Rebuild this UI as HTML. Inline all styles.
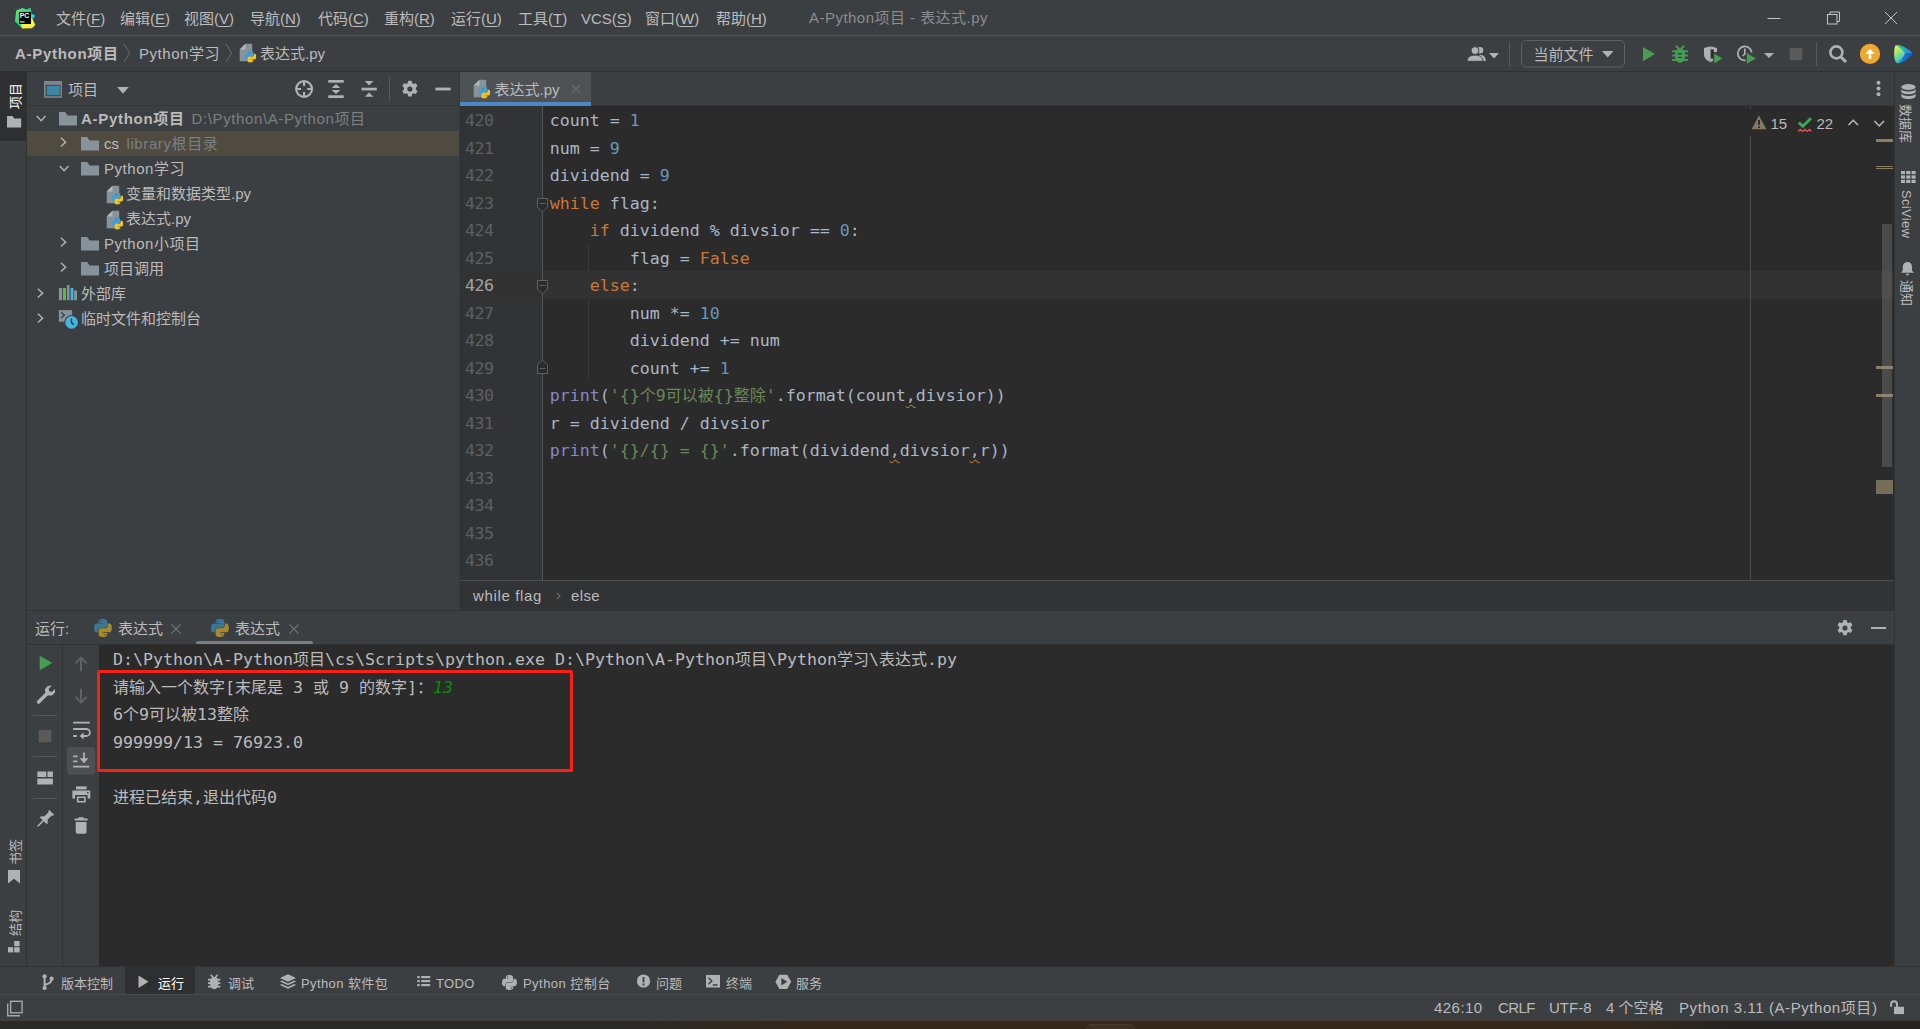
<!DOCTYPE html>
<html lang="zh-CN">
<head>
<meta charset="utf-8">
<title>A-Python项目 - 表达式.py</title>
<style>
*{box-sizing:border-box;margin:0;padding:0}
html,body{width:1920px;height:1029px;overflow:hidden;background:#3c3f41}
body{font-family:"Liberation Sans","Noto Sans CJK SC",sans-serif;font-size:15px;color:#bbbbbb;position:relative;line-height:1}
.a{position:absolute}
.t{position:absolute;white-space:pre;line-height:20px;height:20px}
.b{font-weight:bold;letter-spacing:.7px}
.g{color:#7d7f81}
.mono{font-family:"DejaVu Sans Mono","Liberation Mono","Noto Sans CJK SC",monospace;font-size:16.61px}
.c{font-family:"Noto Sans CJK SC",sans-serif;font-size:16px;line-height:0}
svg{position:absolute;overflow:visible}
u{text-decoration:underline;text-underline-offset:2px;text-decoration-thickness:1px}
.s13{font-size:13px}
/* regions */
#menubar{left:0;top:0;width:1920px;height:36px;background:#3c3f41;border-bottom:1px solid #515355}
#navbar{left:0;top:36px;width:1920px;height:35px;background:#3c3f41}
#navline{left:0;top:71px;width:1920px;height:1px;background:#2f3133}
#leftstrip{left:0;top:72px;width:26px;height:894px;background:#3c3f41}
#leftsel{left:0;top:71px;width:26px;height:70px;background:#2d2f30}
#leftline{left:26px;top:72px;width:1px;height:894px;background:#323232}
#rightstrip{left:1895px;top:72px;width:25px;height:894px;background:#3c3f41}
#rightline{left:1894px;top:72px;width:1px;height:894px;background:#323232}
#projhead{left:27px;top:72px;width:432px;height:33px;background:#3c3f41}
#projline{left:27px;top:105px;width:432px;height:1px;background:#333537}
#proj{left:27px;top:106px;width:432px;height:504px;background:#3c3f41}
#projsep{left:459px;top:72px;width:1px;height:538px;background:#36383a}
#tabs{left:460px;top:72px;width:1434px;height:34px;background:#3c3f41}
#tab1{left:0;top:0;width:131px;height:34px;background:#4e5254;border-bottom:4px solid #4a88c7}
#editor{left:460px;top:106px;width:1434px;height:474px;background:#2b2b2b;overflow:hidden}
#gutter{left:0;top:0;width:82px;height:474px;background:#313335}
#gutline{left:82px;top:0;width:1px;height:474px;background:#555555}
#curline{left:83px;top:165px;width:1351px;height:28px;background:#323232}
#margin{left:1290px;top:0;width:1px;height:474px;background:#4d4d4d}
.ln{position:absolute;left:0;width:33.5px;letter-spacing:-.5px;text-align:right;color:#5d6063;white-space:pre;height:28.5px;line-height:28.5px}
.cl{position:absolute;left:89.7px;color:#a9b7c6;white-space:pre;height:28.5px;line-height:28.5px}
.k{color:#cc7832}.n{color:#6897bb}.s{color:#6a8759}.f{color:#8888c6}
.w{text-decoration:underline wavy #c9903e;text-decoration-thickness:1px;text-underline-offset:3px;text-decoration-skip-ink:none}
#crumbs{left:460px;top:580px;width:1434px;height:30px;background:#313335;border-top:1px solid #4b4d4f}
#runtop{left:27px;top:610px;width:1867px;height:1px;background:#323232}
#runhead{left:28px;top:611px;width:1866px;box-shadow:-1px 0 0 #3c3f41;height:33px;background:#3c3f41}
#runline{left:27px;top:644px;width:1867px;height:1px;background:#323232}
#runtb1{left:27px;top:645px;width:35px;height:321px;background:#3c3f41}
#runtbl{left:62px;top:645px;width:1px;height:321px;background:#323232}
#runtb2{left:63px;top:645px;width:36px;height:321px;background:#3c3f41}
#console{left:99px;top:645px;width:1795px;height:321px;background:#2b2b2b}
.co{position:absolute;left:14px;color:#bbbbbb;white-space:pre;height:28.5px;line-height:28.5px}
#redbox{left:97px;top:670px;width:476.2px;height:102px;border:3.2px solid #fa2012;border-radius:3px 2px 1.5px 2px}
#botline{left:0;top:966px;width:1920px;height:1px;background:#323232}
#botbar{left:0;top:967px;width:1920px;height:27px;background:#3c3f41}
#botsel{left:125px;top:0;width:70px;height:27px;background:#2d2f30}
#statline{left:0;top:994px;width:1920px;height:1px;background:#47494b}
#status{left:0;top:995px;width:1920px;height:25px;background:#3c3f41}
#desk{left:0;top:1020px;width:1920px;height:9px;background:linear-gradient(90deg,#2a2a27 0,#2a2a27 32%,#36291b 42%,#36291b 84%,#262422 90%,#262422 100%);box-shadow:inset 0 1px 0 rgba(255,255,255,.1)}
.vt{position:absolute;white-space:pre;font-size:13px;line-height:16px;height:16px;transform-origin:0 0}
</style>
</head>
<body>
<svg width="0" height="0" style="position:absolute">
<defs>
<symbol id="pylogo" viewBox="0 0 112 112">
<path fill="var(--pb,#3d9fd6)" d="M54.9,0C50.3,0 46,.4 42.1,1.1 30.8,3.1 28.7,7.3 28.7,15v10.2h26.8v3.4H18.6c-7.8,0-14.6,4.7-16.7,13.6-2.5,10.2-2.6,16.6 0,27.3 1.9,7.9 6.5,13.6 14.2,13.6h9.2V70.8c0-8.8 7.7-16.7 16.8-16.7h26.8c7.5,0 13.4-6.1 13.4-13.6V15c0-7.3-6.1-12.7-13.4-13.9C64.3,.3 59.5,0 54.9,0Z"/>
<path fill="var(--py,#f4c31f)" d="M85.6,28.7v11.9c0,9.2-7.8,17-16.8,17H42.1c-7.3,0-13.4,6.3-13.4,13.6v25.5c0,7.3 6.3,11.5 13.4,13.6 8.5,2.5 16.6,2.9 26.8,0 6.8-2 13.4-5.9 13.4-13.6V86.5H55.5v-3.4h40.2c7.8,0 10.7-5.4 13.4-13.6 2.8-8.4 2.7-16.5 0-27.3-1.9-7.8-5.6-13.6-13.4-13.6z"/>
<circle cx="40.6" cy="13" r="5" fill="#3c3f41" fill-opacity=".75"/><circle cx="70.4" cy="98.6" r="5" fill="#3c3f41" fill-opacity=".75"/>
</symbol>
<symbol id="pyfile" viewBox="0 0 20 20">
<path fill="#87939a" d="M7.5,.8H14.2V18.2H1.7V6.6Z"/>
<path fill="#aeb9bf" d="M7.5,.8V6.6H1.7Z"/>
<use href="#pylogo" x="6.6" y="7.8" width="11.8" height="11.8"/>
</symbol>
<symbol id="folder" viewBox="0 0 18 14">
<path fill="#87939a" d="M0,0H6.2L8.6,3.4H18V13.6H0Z"/>
</symbol>
<symbol id="chr" viewBox="0 0 8 12">
<path fill="none" stroke="#afb1b3" stroke-width="1.6" d="M1,0.8L6.2,5.6L1,10.4"/>
</symbol>
<symbol id="chd" viewBox="0 0 12 8">
<path fill="none" stroke="#afb1b3" stroke-width="1.6" d="M0.8,1L5.6,6.2L10.4,1"/>
</symbol>
</defs>
</svg>
<!-- menu bar -->
<div class="a" id="menubar">
<svg style="left:14px;top:7px" width="22" height="22" viewBox="0 0 22 22">
<defs><linearGradient id="lg1" x1="0" y1="0" x2="1" y2="1"><stop offset="0" stop-color="#7be56a"/><stop offset=".5" stop-color="#21d789"/><stop offset="1" stop-color="#17c7a0"/></linearGradient></defs>
<path fill="url(#lg1)" d="M2.2,3.6L8.5,1L12.5,2.6L16.5,0.8L17.5,5L8,21.2L1,14.5Z"/>
<path fill="#f2ef4a" d="M17.5,9.5L21.3,18L18,21.2L8,21.6L7,17L16,9Z"/>
<path fill="#12d6f5" d="M17,6.2L21.2,8.5L19.5,11.5L17,11Z"/>
<rect x="5" y="5" width="12" height="12" fill="#000"/>
<text x="5.7" y="10.6" font-family="Liberation Sans,sans-serif" font-weight="bold" font-size="6.6" fill="#fff" textLength="9.6" lengthAdjust="spacingAndGlyphs">PC</text>
<rect x="6" y="14.4" width="4.6" height="1" fill="#fff"/>
</svg>
<span class="t" style="left:56px;top:9px">文件(<u>F</u>)</span>
<span class="t" style="left:120px;top:9px">编辑(<u>E</u>)</span>
<span class="t" style="left:184px;top:9px">视图(<u>V</u>)</span>
<span class="t" style="left:250px;top:9px">导航(<u>N</u>)</span>
<span class="t" style="left:318px;top:9px">代码(<u>C</u>)</span>
<span class="t" style="left:384px;top:9px">重构(<u>R</u>)</span>
<span class="t" style="left:451px;top:9px">运行(<u>U</u>)</span>
<span class="t" style="left:518px;top:9px">工具(<u>T</u>)</span>
<span class="t" style="left:581px;top:9px">VCS(<u>S</u>)</span>
<span class="t" style="left:645px;top:9px">窗口(<u>W</u>)</span>
<span class="t" style="left:716px;top:9px">帮助(<u>H</u>)</span>
<span class="t" style="left:809px;top:8px;color:#8a8c8e;letter-spacing:.47px">A-Python项目 - 表达式.py</span>
<!-- window controls -->
<svg style="left:1760px;top:8px" width="150" height="22" viewBox="0 0 150 22" fill="none" stroke="#c4c4c4" stroke-width="1">
<path d="M7.5,10.5H20.5"/>
<rect x="67.5" y="6.5" width="9.5" height="9.5"/>
<path d="M70,6.5V4H79.5V13.5H77"/>
<path d="M125,4L137,16M137,4L125,16"/>
</svg>
</div>
<!-- nav bar -->
<div class="a" id="navbar">
<span class="t b" style="left:15px;top:8px">A-Python项目</span>
<svg style="left:123px;top:7px" width="8" height="20" viewBox="0 0 8 20" fill="none" stroke="#6a6d6f" stroke-width="1"><path d="M1,.8L6.6,10L1,19.2"/></svg>
<span class="t" style="left:139px;top:8px;letter-spacing:.55px">Python学习</span>
<svg style="left:224.5px;top:7px" width="8" height="20" viewBox="0 0 8 20" fill="none" stroke="#6a6d6f" stroke-width="1"><path d="M1,.8L6.6,10L1,19.2"/></svg>
<svg style="left:238px;top:7px" width="20" height="20"><use href="#pyfile"/></svg>
<span class="t" style="left:260px;top:8px">表达式.py</span>
<!-- right toolbar -->
<svg style="left:1460px;top:0" width="460" height="35" viewBox="1460 36 460 35">
<!-- people -->
<g fill="#afb1b3">
<circle cx="1480" cy="50.200" r="3.300"/><path d="M1478,61c.8-2 1.600-4.600 .4-5.700c.6-.2 1.200-.2 1.800-.2c3.400,0 5.300,1.500 5.600,5.900z"/>
<circle cx="1475" cy="50.600" r="4" stroke="#3c3f41" stroke-width="1"/><path stroke="#3c3f41" stroke-width="1" d="M1467,61.300c.4-4.600 3.600-6.200 8-6.200s7.600,1.600 8,6.200z"/>
<path d="M1489,53H1499L1494,58.500z"/>
</g>
<path stroke="#555759" stroke-width="1" d="M1509.500,42V66"/>
<rect x="1521.500" y="40.500" width="103" height="26.500" rx="4.500" fill="none" stroke="#5e6062"/>
<path fill="#afb1b3" d="M1602,51H1613.500L1607.750,57.500z"/>
<!-- run -->
<path fill="#499c54" d="M1643,47L1655,54.100L1643,61.300z"/>
<!-- bug -->
<g fill="#499c54" stroke="none">
<ellipse cx="1680" cy="55.600" rx="5" ry="7.400"/>
<path fill="none" stroke="#499c54" stroke-width="2" d="M1676,45.800L1678.800,48.800M1684,45.800L1681.200,48.800M1672.300,51.300H1687.800M1672.300,55.600H1687.800M1672.300,59.900H1687.800"/>
</g>
<path fill="#3c3f41" d="M1677.900,53.100H1682V54.400H1677.900zM1677.900,56.800H1682V58.100H1677.900z"/>
<!-- coverage -->
<path fill="#afb1b3" d="M1710.500,46.200L1704,48V54c0,3.900 2.700,6.800 6.500,8z"/>
<path fill="#afb1b3" d="M1710.500,46.200L1717,48V52H1713.600V49.600H1710.500z"/>
<path fill="#2b2d2f" d="M1711.300,49.600H1713.500V58.600H1711.300z"/>
<path fill="#afb1b3" d="M1710.500,58.600h2.400v2.400l-2.400,1.200z"/>
<path fill="#499c54" stroke="#3c3f41" stroke-width=".8" d="M1713.800,53L1723,58.500L1713.800,64z"/>
<!-- profile -->
<path fill="none" stroke="#afb1b3" stroke-width="1.800" d="M1745.500,60.400A7,7 0 1 1 1751.700,52.300"/>
<path fill="none" stroke="#afb1b3" stroke-width="1.600" d="M1744.800,48.500V54L1742.600,56"/>
<path fill="#499c54" d="M1746.800,53L1755.900,58.400L1746.800,63.800z"/>
<path fill="#afb1b3" d="M1764,53H1774L1769,58z"/>
<!-- stop -->
<rect x="1789.700" y="47.900" width="12.500" height="12.300" fill="#5a5a5a"/>
<path stroke="#555759" stroke-width="1" d="M1816.500,42V66"/>
<!-- search -->
<circle cx="1836.400" cy="52.400" r="6" fill="none" stroke="#afb1b3" stroke-width="2.600"/>
<path stroke="#afb1b3" stroke-width="3" d="M1840.700,56.700L1846,62"/>
<!-- update -->
<circle cx="1870" cy="53.900" r="10.150" fill="#f0a732"/>
<path fill="#fff" d="M1870,48.800L1874.800,53.900H1871.300V58.900H1868.700V53.900H1865.200z"/>
<!-- logo -->
<defs>
<linearGradient id="lgA" x1=".2" y1="0" x2=".6" y2="1"><stop offset="0" stop-color="#f1f640"/><stop offset=".55" stop-color="#7edb8f"/><stop offset="1" stop-color="#1fc3d6"/></linearGradient>
<linearGradient id="lgB" x1="0" y1="0" x2="1" y2=".5"><stop offset="0" stop-color="#25cf7c"/><stop offset=".5" stop-color="#21b3c4"/><stop offset="1" stop-color="#2390ec"/></linearGradient>
<linearGradient id="lgC" x1="1" y1="0" x2="0" y2="1"><stop offset="0" stop-color="#1a55c4"/><stop offset=".6" stop-color="#1878d6"/><stop offset="1" stop-color="#16c0ee"/></linearGradient>
</defs>
<path fill="url(#lgB)" d="M1895.800,45.300C1897,44.300 1899,44.800 1901,45.600C1905,47.300 1910,50.500 1912.200,53L1905,53.800z"/>
<path fill="url(#lgC)" d="M1912.200,53C1912.500,53.800 1912.300,54.500 1911.500,55.400C1908.500,58.400 1902,62.200 1898.500,63.200C1897.600,63.400 1897,63.300 1896.600,62.800L1905,53.800z"/>
<path fill="url(#lgA)" d="M1895.800,45.300C1894.600,46.500 1894.100,50 1894.100,54C1894.100,58 1895,61.600 1896.600,62.800C1900,60.800 1903.500,57.500 1905,53.800C1903.500,50.500 1899.500,47 1895.800,45.300z"/>
</svg>
<span class="t" style="left:1533.500px;top:9px">当前文件</span>
</div>
<div class="a" id="navline"></div>
<!-- left strip -->
<div class="a" id="leftstrip"></div>
<div class="a" id="leftsel"></div>
<div class="a" id="leftline"></div>
<span class="vt" style="left:7.500px;top:109px;transform:rotate(-90deg);color:#ffffff">项目</span>
<svg style="left:7px;top:116px" width="15" height="12" viewBox="0 0 15 12"><path fill="#afb1b3" d="M0,0H5.600L7.200,2.400H14.200V11.600H0z"/></svg>
<span class="vt" style="left:8px;top:864.500px;transform:rotate(-90deg)">书签</span>
<svg style="left:8.400px;top:870.200px" width="12" height="14" viewBox="0 0 12 14"><path fill="#afb1b3" d="M0,0H12V13.600L6,8.800L0,13.600z"/></svg>
<span class="vt" style="left:8px;top:935.500px;transform:rotate(-90deg)">结构</span>
<svg style="left:8.400px;top:941.400px" width="12" height="12" viewBox="0 0 12 12" fill="#afb1b3"><rect x="6.200" y="0" width="5.400" height="5.200"/><rect x="0" y="6.200" width="5.200" height="5.200"/><rect x="6.200" y="6.200" width="5.400" height="5.200"/></svg>
<!-- right strip -->
<div class="a" id="rightstrip"></div>
<div class="a" id="rightline"></div>
<svg style="left:1901px;top:84px" width="15" height="16" viewBox="0 0 15 16" fill="#afb1b3">
<ellipse cx="7.500" cy="3" rx="7.200" ry="3"/>
<path d="M.3,4.800c0,1.600 3.200,2.800 7.200,2.800s7.200-1.200 7.200-2.800v2.600c0,1.600-3.200,2.800-7.200,2.800S.3,9 .3,7.400z"/>
<path d="M.3,9.200c0,1.600 3.200,2.800 7.200,2.800s7.200-1.200 7.200-2.800v2.800c0,1.700-3.200,3-7.200,3S.3,13.700 .3,12z"/>
</svg>
<span class="vt" style="left:1912.500px;top:104px;transform:rotate(90deg)">数据库</span>
<svg style="left:1901px;top:170.500px" width="15" height="12" viewBox="0 0 15 12" fill="#afb1b3">
<rect x="0" y="0" width="4" height="3.200"/><rect x="5.200" y="0" width="4.200" height="3.200"/><rect x="10.600" y="0" width="4" height="3.200"/>
<rect x="0" y="4.400" width="4" height="3.200"/><rect x="5.200" y="4.400" width="4.200" height="3.200"/><rect x="10.600" y="4.400" width="4" height="3.200"/>
<rect x="0" y="8.800" width="4" height="3.200"/><rect x="5.200" y="8.800" width="4.200" height="3.200"/><rect x="10.600" y="8.800" width="4" height="3.200"/>
</svg>
<span class="vt" style="left:1913.500px;top:190px;transform:rotate(90deg);letter-spacing:.3px">SciView</span>
<svg style="left:1901.400px;top:262px" width="13" height="14" viewBox="0 0 13 14" fill="#afb1b3">
<path d="M6.400,0C3.400,0 1.800,2.200 1.800,5V8.400L0,10.800H12.800L11,8.400V5C11,2.200 9.400,0 6.400,0z"/><path d="M4.800,11.800H8a1.600,1.600 0 0 1-3.200,0z"/>
</svg>
<span class="vt" style="left:1913.500px;top:280px;transform:rotate(90deg)">通知</span>
<!-- project header -->
<div class="a" id="projhead"></div>
<div class="a" id="projline"></div>
<svg style="left:44px;top:81px" width="18" height="17" viewBox="0 0 18 17"><rect width="18" height="16.800" fill="#7b868c"/><rect x="1.700" y="3.900" width="14.800" height="11.300" fill="#3c3f41"/><rect x="2.750" y="4.750" width="13" height="9.500" fill="#3e87a6"/></svg>
<span class="t" style="left:68px;top:79.500px">项目</span>
<svg style="left:117px;top:87px" width="12" height="7" viewBox="0 0 12 7"><path fill="#afb1b3" d="M.2,0H11.800L6,6.700z"/></svg>
<svg style="left:288px;top:72px" width="172" height="34" viewBox="288 72 172 34">
<g fill="none" stroke="#afb1b3">
<circle cx="304.100" cy="89" r="7.900" stroke-width="2.200"/>
<path stroke-width="2.200" d="M304.100,81V86M304.100,92V97M296,89H301M307.200,89H312.200"/>
</g>
<g fill="#afb1b3">
<rect x="328.300" y="80" width="15.400" height="2.700"/><rect x="328.300" y="95.300" width="15.400" height="2.700"/>
<path d="M336,84L340.400,88.100H331.600z"/><path d="M336,94L340.400,89.900H331.600z"/>
<rect x="361.500" y="87.700" width="15.300" height="2.700"/>
<path d="M369.100,85.500L373.400,81H364.800z"/><path d="M369.100,92.400L373.400,96.700H364.800z"/>
<rect x="435.400" y="87.600" width="15.200" height="2.800"/>
</g>
<path stroke="#5a5754" stroke-width="1" d="M389.500,77V101"/>
<g transform="translate(409.900,89)" fill="#afb1b3">
<path d="M-1.700,-8.200h3.400l.5,2.300 1.500,.9 2.200,-.8 1.700,2.900-1.700,1.600v1.800l1.700,1.600-1.700,2.900-2.200,-.8-1.500,.9-.5,2.300h-3.400l-.5,-2.300-1.500,-.9-2.200,.8-1.700,-2.900 1.700,-1.600v-1.800l-1.700,-1.600 1.700,-2.900 2.200,.8 1.500,-.9z"/>
<circle r="2.600" fill="#3c3f41"/>
</g>
</svg>
<!-- project tree -->
<div class="a" id="proj">
<div class="a" style="left:0;top:25px;width:432px;height:25px;background:#4f4b41"></div>
</div>
<svg style="left:36.400px;top:114.500px" width="11" height="7.300"><use href="#chd"/></svg>
<svg style="left:59px;top:111.500px" width="18" height="14"><use href="#folder"/></svg>
<span class="t b" style="left:81px;top:109px;color:#bbbbbb">A-Python项目</span><span class="t g" style="left:191.500px;top:109px;letter-spacing:.62px">D:\Python\A-Python项目</span>
<svg style="left:60.400px;top:137.200px" width="7.300" height="11"><use href="#chr"/></svg>
<svg style="left:81px;top:136.500px" width="18" height="14"><use href="#folder"/></svg>
<span class="t" style="left:104px;top:134px">cs</span><span class="t g" style="left:126.500px;top:134px;letter-spacing:.6px">library根目录</span>
<svg style="left:59.400px;top:164.500px" width="11" height="7.300"><use href="#chd"/></svg>
<svg style="left:81px;top:161.500px" width="18" height="14"><use href="#folder"/></svg>
<span class="t" style="left:104px;top:159px;letter-spacing:.55px">Python学习</span>
<svg style="left:105px;top:184.500px" width="20" height="20"><use href="#pyfile"/></svg>
<span class="t" style="left:126px;top:184px">变量和数据类型.py</span>
<svg style="left:105px;top:209.500px" width="20" height="20"><use href="#pyfile"/></svg>
<span class="t" style="left:126px;top:209px">表达式.py</span>
<svg style="left:60.400px;top:237.200px" width="7.300" height="11"><use href="#chr"/></svg>
<svg style="left:81px;top:236.500px" width="18" height="14"><use href="#folder"/></svg>
<span class="t" style="left:104px;top:234px;letter-spacing:.55px">Python小项目</span>
<svg style="left:60.400px;top:262.200px" width="7.300" height="11"><use href="#chr"/></svg>
<svg style="left:81px;top:261.500px" width="18" height="14"><use href="#folder"/></svg>
<span class="t" style="left:104px;top:259px">项目调用</span>
<svg style="left:37.400px;top:287.500px" width="7.300" height="11"><use href="#chr"/></svg>
<svg style="left:58px;top:284px" width="20" height="18" viewBox="58 284 20 18"><rect x="58.900" y="288" width="3.200" height="12.200" fill="#87939a"/><rect x="62.900" y="288" width="3.100" height="12.200" fill="#62b543"/><rect x="66.900" y="285" width="2.600" height="15.200" fill="#87939a"/><rect x="70.600" y="288" width="2.800" height="12.200" fill="#40b6e0"/><rect x="74.100" y="290.500" width="2.900" height="9.700" fill="#87939a"/></svg>
<span class="t" style="left:81px;top:284px">外部库</span>
<svg style="left:37.400px;top:312.500px" width="7.300" height="11"><use href="#chr"/></svg>
<svg style="left:58px;top:309px" width="22" height="22" viewBox="58 309 22 22"><rect x="58.900" y="310.100" width="13.200" height="11.600" fill="#87939a"/><path fill="none" stroke="#3c3f41" stroke-width="1.300" d="M61,312.300L64.400,315.100L61,318"/><circle cx="71.600" cy="322.400" r="7.300" fill="#3c3f41"/><circle cx="71.600" cy="322.400" r="6.300" fill="#40b6e0"/><path fill="none" stroke="#2b3a42" stroke-width="1.400" d="M71.400,318.400V322.600L73.800,324.600"/></svg>
<span class="t" style="left:81px;top:309px">临时文件和控制台</span>
<div class="a" id="projsep"></div>
<div class="a" id="tabs"><div class="a" style="left:0;top:33px;width:1434px;height:1px;background:#333537"></div><div class="a" id="tab1"></div>
<svg style="left:11.500px;top:7px" width="20" height="20"><use href="#pyfile"/></svg>
<span class="t" style="left:34.500px;top:7.500px">表达式.py</span>
<svg style="left:111px;top:12px" width="10" height="10" viewBox="0 0 10 10"><path stroke="#6e7274" stroke-width="1.100" d="M.8,.8L9.200,9.200M9.200,.8L.8,9.200"/></svg>
<svg style="left:1416px;top:8px" width="5" height="18" viewBox="0 0 5 18" fill="#afb1b3"><circle cx="2.500" cy="2.700" r="2"/><circle cx="2.500" cy="8.500" r="2"/><circle cx="2.500" cy="14.300" r="2"/></svg>
</div>
<div class="a mono" id="editor"><div class="a" id="gutter"></div><div class="a" id="curline"></div><div class="a" style="left:0;top:165px;width:82px;height:28px;background:#323232"></div><div class="a" id="gutline"></div><div class="a" id="margin"></div>
<div class="a" style="left:128px;top:138px;width:1px;height:27px;background:#3b3b3b"></div>
<div class="a" style="left:128px;top:193px;width:1px;height:79px;background:#3b3b3b"></div>
<div class="ln" style="top:0.50px">420</div>
<div class="cl" style="top:0.50px">count = <span class="n">1</span></div>
<div class="ln" style="top:28.50px">421</div>
<div class="cl" style="top:28.50px">num = <span class="n">9</span></div>
<div class="ln" style="top:55.50px">422</div>
<div class="cl" style="top:55.50px">dividend = <span class="n">9</span></div>
<div class="ln" style="top:83.50px">423</div>
<div class="cl" style="top:83.50px"><span class="k">while</span> flag:</div>
<div class="ln" style="top:110.50px">424</div>
<div class="cl" style="top:110.50px">    <span class="k">if</span> dividend % divsior == <span class="n">0</span>:</div>
<div class="ln" style="top:138.50px">425</div>
<div class="cl" style="top:138.50px">        flag = <span class="k">False</span></div>
<div class="ln" style="top:165.50px;color:#a4a3a3">426</div>
<div class="cl" style="top:165.50px">    <span class="k">else</span>:</div>
<div class="ln" style="top:193.50px">427</div>
<div class="cl" style="top:193.50px">        num *= <span class="n">10</span></div>
<div class="ln" style="top:220.50px">428</div>
<div class="cl" style="top:220.50px">        dividend += num</div>
<div class="ln" style="top:248.50px">429</div>
<div class="cl" style="top:248.50px">        count += <span class="n">1</span></div>
<div class="ln" style="top:275.50px">430</div>
<div class="cl" style="top:275.50px"><span class="f">print</span>(<span class="s">'{}<span class="c">个</span>9<span class="c">可以被</span>{}<span class="c">整除</span>'</span>.format(count<span class="w">,</span>divsior))</div>
<div class="ln" style="top:303.50px">431</div>
<div class="cl" style="top:303.50px">r = dividend / divsior</div>
<div class="ln" style="top:330.50px">432</div>
<div class="cl" style="top:330.50px"><span class="f">print</span>(<span class="s">'{}/{} = {}'</span>.format(dividend<span class="w">,</span>divsior<span class="w">,</span>r))</div>
<div class="ln" style="top:358.50px">433</div>
<div class="ln" style="top:385.50px">434</div>
<div class="ln" style="top:413.50px">435</div>
<div class="ln" style="top:440.50px">436</div>
<svg style="left:77px;top:92px" width="11" height="15" viewBox="0 0 11 15"><path fill="#2b2b2b" stroke="#5e6062" stroke-width="1" d="M.5,.5H10.500V9L5.500,14L.5,9z"/><path stroke="#5e6062" stroke-width="1" d="M2.500,5.500H8.500"/></svg>
<svg style="left:77px;top:174px" width="11" height="15" viewBox="0 0 11 15"><path fill="#2b2b2b" stroke="#5e6062" stroke-width="1" d="M.5,.5H10.500V9L5.500,14L.5,9z"/><path stroke="#5e6062" stroke-width="1" d="M2.500,5.500H8.500"/></svg>
<svg style="left:77px;top:253px" width="11" height="15" viewBox="0 0 11 15"><path fill="#2b2b2b" stroke="#5e6062" stroke-width="1" d="M.5,14.500H10.500V6L5.500,1L.5,6z"/><path stroke="#5e6062" stroke-width="1" d="M2.500,9.500H8.500"/></svg>
<div class="a" style="left:1286px;top:3px;width:140px;height:27px;background:#2b2b2b"></div>
<svg style="left:1291px;top:9px" width="16" height="15" viewBox="0 0 16 15"><path fill="#857a5f" d="M8,.6L15.400,14.300H.6z"/><path stroke="#2b2b2b" stroke-width="1.800" d="M8,5V10M8,11.200V13"/></svg>
<span class="t" style="left:1310.500px;top:7.500px;font-family:'Liberation Sans',sans-serif;font-size:15px;color:#bbbbbb">15</span>
<svg style="left:1337px;top:10px" width="16" height="17" viewBox="0 0 16 17"><path fill="none" stroke="#3fa556" stroke-width="3" d="M1.800,6.500L5.800,10.200L14,2.200"/><path fill="none" stroke="#e0524d" stroke-width="1.100" d="M1,15.500L3.300,13.300L5.600,15.500L7.900,13.300L10.200,15.500L12.500,13.300L14.600,15.300"/></svg>
<span class="t" style="left:1356.500px;top:7.500px;font-family:'Liberation Sans',sans-serif;font-size:15px;color:#bbbbbb">22</span>
<svg style="left:1387px;top:12px" width="40" height="10" viewBox="0 0 40 10" fill="none" stroke="#bbbbbb" stroke-width="1.500"><path d="M1.500,7L6.200,2.200L11,7"/><path d="M27.500,3L32.200,8L37,3"/></svg>
<div class="a" style="left:1416px;top:33px;width:17px;height:3px;background:#8a7f60"></div>
<div class="a" style="left:1416px;top:60px;width:17px;height:1px;background:#8a7f60"></div>
<div class="a" style="left:1416px;top:62px;width:17px;height:1px;background:#8a7f60"></div>
<div class="a" style="left:1416px;top:260px;width:17px;height:3px;background:#8a7f60"></div>
<div class="a" style="left:1416px;top:288px;width:17px;height:3px;background:#8a7f60"></div>
<div class="a" style="left:1416px;top:374px;width:17px;height:14px;background:#756d56"></div>
<div class="a" style="left:1422px;top:118px;width:10px;height:243px;background:rgba(150,150,150,.3)"></div>
</div>
<div class="a" id="crumbs"><span class="t" style="left:13px;top:4.500px;letter-spacing:.65px">while flag</span><svg style="left:95.500px;top:11px" width="5" height="8" viewBox="0 0 5 8"><path fill="none" stroke="#6e7274" stroke-width="1.100" d="M.8,.8L4,4L.8,7.200"/></svg><span class="t" style="left:111px;top:4.500px;letter-spacing:.4px">else</span></div>
<!-- run panel -->
<div class="a" id="runtop"></div>
<div class="a" id="runhead">
<span class="t" style="left:7px;top:7.500px">运行:</span>
<svg style="left:66px;top:8px;--pb:#3b7696;--py:#a58a2c" width="18" height="18"><use href="#pylogo" width="18" height="18"/></svg>
<span class="t" style="left:90px;top:7.500px">表达式</span>
<svg style="left:143px;top:13px" width="10" height="10" viewBox="0 0 10 10"><path stroke="#6e7274" stroke-width="1.100" d="M.5,.5L9.500,9.500M9.500,.5L.5,9.500"/></svg>
<svg style="left:183px;top:8px;--pb:#3b7696;--py:#a58a2c" width="18" height="18"><use href="#pylogo" width="18" height="18"/></svg>
<span class="t" style="left:207px;top:7.500px">表达式</span>
<svg style="left:260.500px;top:13px" width="10" height="10" viewBox="0 0 10 10"><path stroke="#6e7274" stroke-width="1.100" d="M.5,.5L9.500,9.500M9.500,.5L.5,9.500"/></svg>
<div class="a" style="left:168px;top:30px;width:117px;height:3.500px;border-radius:2px;background:#7a7e82"></div>
<svg style="left:1809px;top:9px" width="16" height="16" viewBox="-8.200 -8.200 16.400 16.400" fill="#afb1b3">
<path d="M-1.700,-8.200h3.400l.5,2.300 1.500,.9 2.200,-.8 1.700,2.900-1.700,1.600v1.800l1.700,1.600-1.700,2.900-2.200,-.8-1.500,.9-.5,2.300h-3.400l-.5,-2.300-1.500,-.9-2.200,.8-1.700,-2.900 1.700,-1.600v-1.800l-1.700,-1.600 1.700,-2.900 2.200,.8 1.500,-.9z"/>
<circle r="2.600" fill="#3c3f41"/></svg>
<div class="a" style="left:1842.500px;top:15.700px;width:15px;height:2.700px;background:#afb1b3"></div>
</div>
<div class="a" id="runline"></div>
<div class="a" id="runtb1"></div>
<div class="a" id="runtbl"></div>
<div class="a" id="runtb2"></div>
<svg style="left:28px;top:645px" width="71" height="200" viewBox="28 645 71 200">
<!-- col 1 -->
<path fill="#499c54" d="M39.700,655.700L52.300,663L39.700,670.300z"/>
<g transform="translate(45.200,695.400) rotate(45) scale(.92)" fill="#afb1b3">
<path d="M-1.900,-3V10.200a1.900,1.900 0 0 0 3.800,0V-3z"/>
<path d="M-5.400,-7.600a5.500,5.500 0 0 0 3.400,5.300h4a5.500,5.500 0 0 0 3.400,-5.300a5.500,5.500 0 0 0-2.900,-4.900v4.700l-2.500,1.500l-2.500,-1.500v-4.700a5.500,5.500 0 0 0-2.900,4.900z"/>
</g>
<path stroke="#555759" stroke-width="1" d="M33,715.500H57M33,756.500H57M33,798.500H57"/>
<rect x="38.700" y="730" width="12.700" height="12.300" fill="#5a5a5a"/>
<g fill="#afb1b3"><rect x="37.300" y="771.500" width="9" height="5.500"/><rect x="47.500" y="771.500" width="5.400" height="5.500"/><rect x="37.300" y="778.500" width="15.600" height="6"/></g>
<g transform="translate(45,819) rotate(45)" fill="#afb1b3"><path d="M-3.400,-9.500H3.400V-8L2.300,-7.300V-1.500L5,1.300V2.400H.8V9.200L0,11.400L-.8,9.200V2.400H-5V1.300L-2.300,-1.500V-7.300L-3.400,-8z"/></g>
<!-- col 2 -->
<g fill="none" stroke="#5f6163" stroke-width="2"><path d="M81,671.200V658M75.300,663.400L81,657.600L86.700,663.400"/><path d="M81,688.800V702M75.300,696.800L81,702.600L86.700,696.800"/></g>
<g fill="none" stroke="#afb1b3" stroke-width="1.800"><path d="M73.100,722.700H89.900M73.100,729H86.400a3.500,3.500 0 0 1 0,7H82M73.100,736H76.800"/></g>
<path fill="#afb1b3" d="M83.600,732.400V739.600L79.600,736z"/>
<rect x="66.900" y="747.100" width="28.200" height="27.700" rx="4" fill="#4c5052"/>
<g fill="none" stroke="#afb1b3" stroke-width="1.800"><path d="M73.100,766.700H89.300M73.100,756.300H77.500M73.100,761.300H77.500M84,752.600V760.500"/></g>
<path fill="#afb1b3" d="M79.600,758.300H88.400L84,763.300z"/>
<g fill="#afb1b3"><rect x="76" y="786.400" width="10.600" height="3"/><path d="M72.400,790.600H90.300V798.400H87.600V795H75.100V798.400H72.400z"/><path d="M76.900,796.400H85.700V802.600H76.900zM78.500,798V801H84.100V798z" fill-rule="evenodd"/></g>
<rect x="87" y="792" width="1.600" height="1.400" fill="#3c3f41"/>
<g fill="#afb1b3"><path d="M78.500,817.200H83.700V818.600H87.600V820.600H74.600V818.600H78.500z"/><path d="M75.700,822H86.500V832a1.700,1.700 0 0 1-1.700,1.700H77.400a1.700,1.700 0 0 1-1.700,-1.700z"/></g>
</svg>
<div class="a mono" id="console">
<div class="co" style="top:0.500px">D:\Python\A-Python<span class="c">项目</span>\cs\Scripts\python.exe D:\Python\A-Python<span class="c">项目</span>\Python<span class="c">学习</span>\<span class="c">表达式</span>.py</div>
<div class="co" style="top:28.500px"><span class="c">请输入一个数字</span>[<span class="c">末尾是</span> 3 <span class="c">或</span> 9 <span class="c">的数字</span>]<span class="c">：</span><i style="color:#0d8a0d">13</i></div>
<div class="co" style="top:55.500px">6<span class="c">个</span>9<span class="c">可以被</span>13<span class="c">整除</span></div>
<div class="co" style="top:83.500px">999999/13 = 76923.0</div>
<div class="co" style="top:138.500px"><span class="c">进程已结束</span>,<span class="c">退出代码</span>0</div>
</div>
<div class="a" id="redbox"></div>
<!-- bottom tool bar -->
<div class="a" id="botline"></div>
<div class="a s13" id="botbar"><div class="a" id="botsel"></div>
<svg style="left:0;top:0" width="830" height="27" viewBox="0 967 830 27">
<g fill="none" stroke="#afb1b3" stroke-width="2"><path d="M44.600,976.500V988M44.600,985.200C47,983.600 51.600,984 51.600,979"/></g>
<g fill="#afb1b3"><circle cx="44.600" cy="976.300" r="2.100"/><circle cx="44.600" cy="988" r="2.100"/><circle cx="51.600" cy="978.700" r="2.100"/></g>
<path fill="#afb1b3" d="M138.500,975.500L148.500,981.800L138.500,988z"/>
<g fill="#afb1b3"><ellipse cx="214.200" cy="983" rx="4.300" ry="6.200"/><path fill="none" stroke="#afb1b3" stroke-width="1.600" d="M210.800,974.800L213,977.400M217.600,974.800L215.400,977.400M208,979.600H220.400M208,983.100H220.400M208,986.600H220.400"/></g>
<g fill="#afb1b3"><path d="M288,974.300L296,978L288,981.700L280,978z"/><path d="M281.800,980.600L280,981.500L288,985.200L296,981.500L294.200,980.600L288,983.500z"/><path d="M281.800,984.100L280,985L288,988.700L296,985L294.200,984.100L288,987z"/></g>
<g fill="#afb1b3"><rect x="417.300" y="976" width="2.400" height="2.200"/><rect x="417.300" y="980" width="2.400" height="2.200"/><rect x="417.300" y="984" width="2.400" height="2.200"/><rect x="421.200" y="976" width="9" height="2.200"/><rect x="421.200" y="980" width="9" height="2.200"/><rect x="421.200" y="984" width="9" height="2.200"/></g>
<circle cx="643.500" cy="981" r="6.600" fill="#afb1b3"/><path stroke="#3c3f41" stroke-width="1.900" d="M643.500,977V982.200M643.500,983.600V985.600"/>
<rect x="706" y="975" width="14" height="12.500" fill="#afb1b3"/><path fill="none" stroke="#3c3f41" stroke-width="1.400" d="M708.500,977.800L711.800,981L708.500,984.200M712.800,985H717.500"/>
<path fill="#afb1b3" d="M779.400,974.700H787.200L791.200,981.800L787.200,988.900H779.400L775.400,981.800z"/><path fill="#3c3f41" d="M781.300,978L787.200,981.800L781.300,985.600z"/>
</svg>
<svg style="left:502px;top:7.500px;--pb:#afb1b3;--py:#afb1b3" width="15" height="15"><use href="#pylogo" width="15" height="15"/></svg>
<span class="t" style="left:61px;top:6.500px">版本控制</span>
<span class="t" style="left:158px;top:6.500px;color:#ffffff">运行</span>
<span class="t" style="left:228px;top:6.500px">调试</span>
<span class="t" style="left:301px;top:6.500px;letter-spacing:.4px">Python 软件包</span>
<span class="t" style="left:436px;top:6.500px;letter-spacing:.35px">TODO</span>
<span class="t" style="left:523px;top:6.500px;letter-spacing:.45px">Python 控制台</span>
<span class="t" style="left:656px;top:6.500px">问题</span>
<span class="t" style="left:726px;top:6.500px">终端</span>
<span class="t" style="left:796px;top:6.500px">服务</span>
</div>
<div class="a" id="statline"></div>
<div class="a" id="status">
<svg style="left:6px;top:4.500px" width="18" height="18" viewBox="6 999.500 18 18" fill="none" stroke="#a3a8ab" stroke-width="1.400"><rect x="10.600" y="1000.800" width="11.500" height="11.500"/><path d="M7.700,1003V1015.200H20"/></svg>
<span class="t" style="left:1434px;top:2.500px;letter-spacing:.45px">426:10</span>
<span class="t" style="left:1498px;top:2.500px;letter-spacing:-.6px">CRLF</span>
<span class="t" style="left:1549px;top:2.500px">UTF-8</span>
<span class="t" style="left:1606px;top:2.500px">4 个空格</span>
<span class="t" style="left:1679px;top:2.500px;letter-spacing:.57px">Python 3.11 (A-Python项目)</span>
<svg style="left:1889px;top:4px" width="16" height="16" viewBox="0 0 16 16"><path fill="none" stroke="#afb1b3" stroke-width="2" d="M2.100,7.800V5.300a2.950,2.950 0 0 1 5.900,0V8"/><rect x="5" y="7.800" width="10" height="7.300" fill="#afb1b3"/></svg>
</div>
<div class="a" id="desk"><div class="a" style="left:1085.500px;top:4px;width:49.500px;height:8px;border:1px solid #46392b;border-radius:5px 5px 0 0;background:#3d3124"></div></div>
</body>
</html>
